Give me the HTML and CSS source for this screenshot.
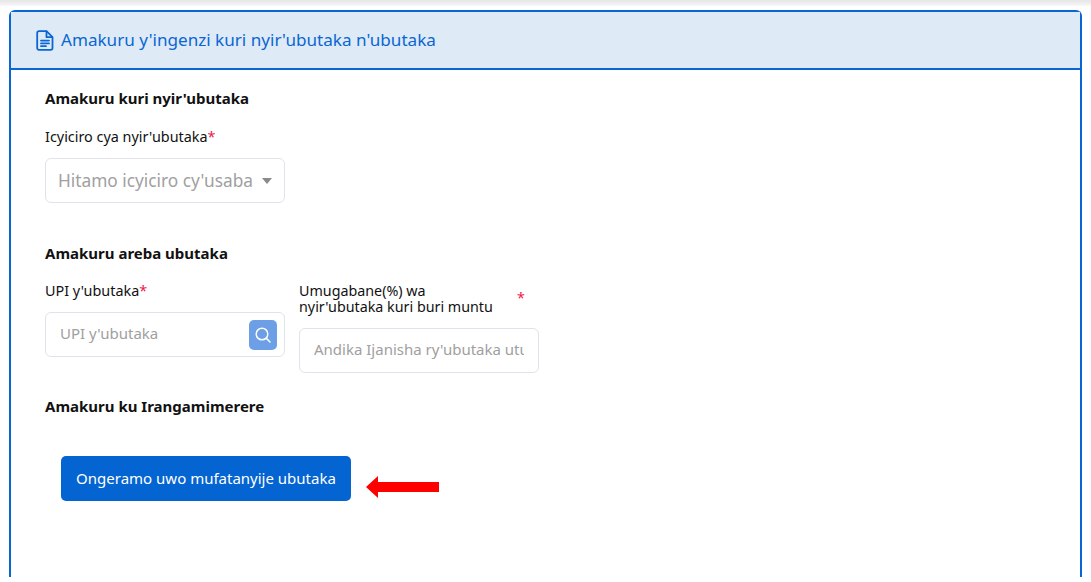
FILE: index.html
```html
<!DOCTYPE html>
<html lang="rw">
<head>
<meta charset="utf-8">
<title>Amakuru y'ingenzi</title>
<link rel="stylesheet" href="styles.css">
</head>
<body>
<div class="topshade"></div>
<section class="card">
  <header class="card-head">
    <svg class="doc-icon" width="18" height="21" viewBox="0 0 18 21" fill="none" stroke="currentColor" stroke-width="1.8" stroke-linejoin="round" stroke-linecap="round">
      <path d="M3 1.2h7.5l6 6V18a1.8 1.8 0 0 1-1.8 1.8H3A1.8 1.8 0 0 1 1.2 18V3A1.8 1.8 0 0 1 3 1.2z"/>
      <path d="M10.5 1.5v5.7h5.7"/>
      <path d="M5 10.6h8M5 13.4h8M5 16.2h5"/>
    </svg>
    <h1 class="card-title">Amakuru y'ingenzi kuri nyir'ubutaka n'ubutaka</h1>
  </header>
  <div class="card-body">
    <h2 class="section-title">Amakuru kuri nyir'ubutaka</h2>
    <div class="field field-owner">
      <label class="label">Icyiciro cya nyir'ubutaka<span class="req">*</span></label>
      <div class="control select">
        <span class="select-text">Hitamo icyiciro cy'usaba</span>
        <span class="caret"></span>
      </div>
    </div>

    <h2 class="section-title section-land">Amakuru areba ubutaka</h2>
    <div class="row">
      <div class="field">
        <label class="label">UPI y'ubutaka<span class="req">*</span></label>
        <div class="control search">
          <span class="ph">UPI y'ubutaka</span>
          <span class="search-btn">
            <svg width="18" height="18" viewBox="0 0 18 18" fill="none" stroke="#fff" stroke-width="1.5" stroke-linecap="round">
              <circle cx="8" cy="8" r="5.8"/>
              <path d="M12.4 12.4l3.6 3.6"/>
            </svg>
          </span>
        </div>
      </div>
      <div class="field">
        <label class="label label-double">
          <span class="label-text">Umugabane(%) wa<br>nyir'ubutaka kuri buri muntu</span>
          <span class="req req-side">*</span>
        </label>
        <div class="control plain"><span class="ph ph-clip">Andika Ijanisha ry'ubutaka utunze</span></div>
      </div>
    </div>

    <h2 class="section-title section-project">Amakuru ku Irangamimerere</h2>
    <div class="action">
      <button class="btn" type="button">Ongeramo uwo mufatanyije ubutaka</button>
      <svg class="arrow" width="74" height="24" viewBox="0 0 74 24"><path d="M0 12L12 1v6h61v10H12v6z" fill="#fe0000"/></svg>
    </div>
  </div>
</section>
</body>
</html>
```
FILE: styles.css
```css
* { box-sizing: border-box; }
html, body { margin: 0; height: 100%; }
body {
  background: #fff;
  font-family: "Noto Sans", "Open Sans", sans-serif;
  color: #111;
  overflow: hidden;
  height: 582px;
  padding: 0 9px;
}
.topshade {
  height: 6px;
  margin: 0 -9px 4px;
  background: linear-gradient(#e6e6e6, #f1f1f1 70%, #fbfbfb);
}
.card {
  height: 567px;
  border: 2px solid #0a66d2;
  border-bottom: 0;
  border-radius: 6px 6px 0 0;
}
.card-head {
  display: flex;
  align-items: center;
  gap: 7px;
  height: 58px;
  padding: 0 25px;
  background: #deebf7;
  border-bottom: 2px solid #0a66d2;
  color: #0a66d2;
}
.doc-icon { flex: none; }
.card-title { margin: 0 0 2px; font-size: 17.1px; font-weight: 400; }
.card-body { padding: 18px 34px; }
.section-title { margin: 0; font-size: 15px; line-height: 20px; font-weight: 700; color: #111; }
.section-land { margin-top: 40px; }
.section-project { margin-top: 23px; }
.field { width: 240px; }
.field-owner { margin-top: 19px; }
.label { display: block; font-size: 14.4px; line-height: 20px; color: #111; }
.req { color: #f0144b; }
.label-double { display: flex; justify-content: space-between; font-size: 14.3px; line-height: 16px; height: 36px; padding-top: 2px; padding-right: 14px; }
.label-text { display: block; }
.req-side { padding-top: 7px; }
.control {
  display: flex;
  align-items: center;
  height: 45px;
  border: 1px solid #dfe3ea;
  border-radius: 6px;
  background: #fff;
  margin-top: 11px;
}
.select { padding: 0 12px; justify-content: space-between; font-size: 17.3px; color: #a0a0a0; }
.select-text { white-space: nowrap; }
.caret { width: 0; height: 0; border: 5px solid transparent; border-top: 6px solid #8a8a8a; border-bottom: 0; }
.row { display: flex; gap: 14px; align-items: flex-start; margin-top: 18px; }
.search { padding: 0 7px 0 14px; justify-content: space-between; }
.ph { font-size: 15px; line-height: 20px; padding-bottom: 3px; color: #a0a0a0; white-space: nowrap; }
.search-btn {
  width: 28px; height: 30px;
  display: flex; align-items: center; justify-content: center;
  background: #6c9fe6;
  border-radius: 5px;
}
.plain { padding: 0 14px; }
.ph-clip { display: block; overflow: hidden; width: 100%; }
.action { display: flex; align-items: center; margin: 40px 0 0 16px; }
.btn {
  width: 290px; height: 45px;
  border: 0;
  border-radius: 5px;
  background: #0364d2;
  color: #fff;
  font: 400 15px "Noto Sans", "Open Sans", sans-serif;
  padding: 0 0 2px;
}
.arrow { margin: 16px 0 0 15px; }
```
